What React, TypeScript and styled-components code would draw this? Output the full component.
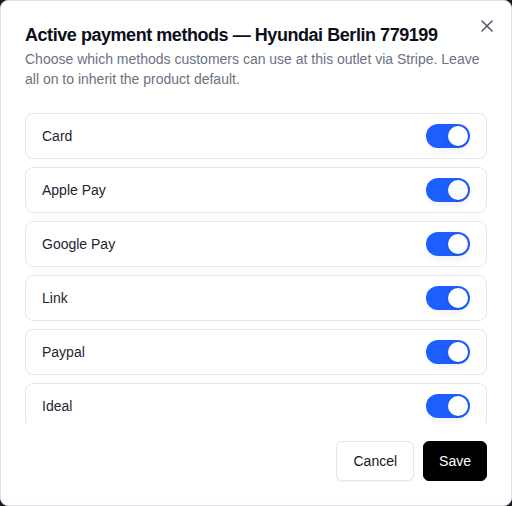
import { createGlobalStyle, styled } from "styled-components";
import { useState } from "react";

const GlobalStyle = createGlobalStyle`
  html, body {
    margin: 0;
    padding: 0;
    background: #1b1d22;
  }
  * { box-sizing: border-box; }
  body {
    font-family: "Liberation Sans", Arial, sans-serif;
  }
`

const Dialog = styled.div`
  position: relative;
  width: 512px;
  height: 506px;
  background: #ffffff;
  border: 1px solid #dde2ea;
  border-radius: 8px;
  padding: 20px 24px 24px;
  display: flex;
  flex-direction: column;
  overflow: hidden;
`

const CloseButton = styled.button`
  position: absolute;
  top: 17px;
  right: 16px;
  width: 16px;
  height: 16px;
  padding: 0;
  border: none;
  background: none;
  color: #4b5563;
  display: flex;
  align-items: center;
  justify-content: center;
  cursor: pointer;
`

const Title = styled.h2`
  margin: 0;
  font-size: 18px;
  line-height: 28px;
  font-weight: 700;
  letter-spacing: -0.025em;
  color: #0b0f19;
`

const Description = styled.p`
  margin: 0;
  font-size: 14px;
  line-height: 20px;
  color: #6b7280;
`

const List = styled.div`
  margin-top: 24px;
  height: 312px;
  overflow: hidden;
  display: flex;
  flex-direction: column;
  gap: 8px;
`

const Row = styled.div`
  flex-shrink: 0;
  height: 46px;
  border: 1px solid #e5e7eb;
  border-radius: 8px;
  padding: 0 16px;
  display: flex;
  align-items: center;
  justify-content: space-between;
`

const Label = styled.span`
  font-size: 14px;
  color: #1f2430;
`

const Switch = styled.button<{ $on: boolean }>`
  width: 44px;
  height: 24px;
  border: none;
  padding: 2px;
  border-radius: 999px;
  background: ${(p) => (p.$on ? "#1d5efe" : "#d1d5db")};
  display: flex;
  justify-content: ${(p) => (p.$on ? "flex-end" : "flex-start")};
  box-shadow: 0 4px 8px -2px rgba(0, 0, 0, 0.08);
  cursor: pointer;
`

const Knob = styled.span`
  width: 20px;
  height: 20px;
  border-radius: 50%;
  background: #ffffff;
  box-shadow: 0 1px 3px rgba(0, 0, 0, 0.15);
`

const Footer = styled.div`
  margin-top: auto;
  display: flex;
  justify-content: flex-end;
  gap: 9px;
`

const Button = styled.button<{ $primary?: boolean }>`
  height: 40px;
  padding: 0 ${(p) => (p.$primary ? "15px" : "16px")};
  border-radius: 6px;
  font-family: inherit;
  font-size: 14px;
  border: 1px solid ${(p) => (p.$primary ? "#000" : "#e2e5ea")};
  background: ${(p) => (p.$primary ? "#000" : "#fff")};
  color: ${(p) => (p.$primary ? "#fff" : "#111827")};
  box-shadow: ${(p) => (p.$primary ? "none" : "0 1px 2px rgba(0,0,0,0.05)")};
  cursor: pointer;
`

const methods = ["Card", "Apple Pay", "Google Pay", "Link", "Paypal", "Ideal"]

export default function App() {
  const [enabled, setEnabled] = useState<Record<string, boolean>>(
    Object.fromEntries(methods.map((m) => [m, true]))
  )

  return (
    <>
      <GlobalStyle />
      <Dialog>
        <CloseButton aria-label="Close">
          <svg width="12" height="12" viewBox="0 0 12 12" fill="none" stroke="currentColor" strokeWidth="1.5" strokeLinecap="round">
            <path d="M1 1 L11 11 M11 1 L1 11" />
          </svg>
        </CloseButton>
        <Title>Active payment methods — Hyundai Berlin 779199</Title>
        <Description>
          Choose which methods customers can use at this outlet via Stripe. Leave all on to inherit the product default.
        </Description>
        <List>
          {methods.map((m) => (
            <Row key={m}>
              <Label>{m}</Label>
              <Switch
                $on={enabled[m]}
                onClick={() => setEnabled({ ...enabled, [m]: !enabled[m] })}
              >
                <Knob />
              </Switch>
            </Row>
          ))}
        </List>
        <Footer>
          <Button>Cancel</Button>
          <Button $primary>Save</Button>
        </Footer>
      </Dialog>
    </>
  )
}
